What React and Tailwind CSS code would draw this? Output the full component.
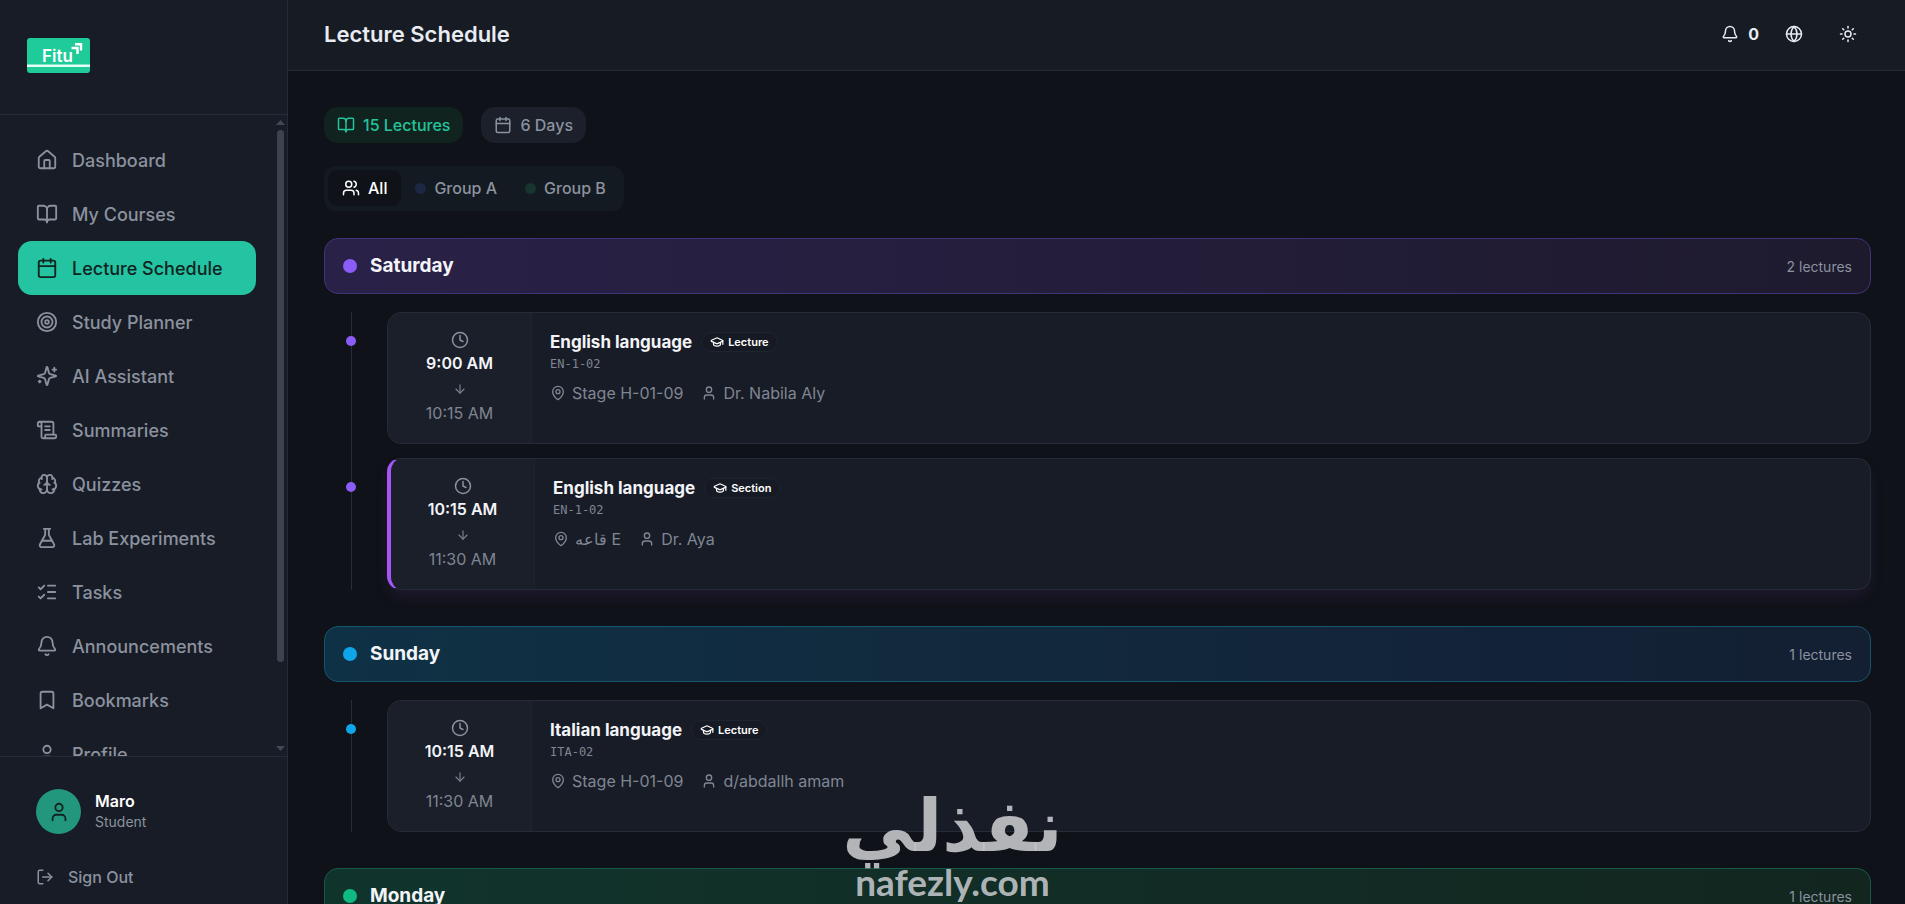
import {
  House, BookOpen, Calendar, Target, Sparkles, ScrollText, Brain, FlaskConical,
  ListChecks, Bell, Bookmark, User, LogOut, Globe, Sun, Users, Clock, ArrowDown,
  GraduationCap, MapPin,
} from "lucide-react";

const navItems = [
  { label: "Dashboard", icon: House },
  { label: "My Courses", icon: BookOpen },
  { label: "Lecture Schedule", icon: Calendar, active: true },
  { label: "Study Planner", icon: Target },
  { label: "AI Assistant", icon: SparklesDot },
  { label: "Summaries", icon: ScrollText },
  { label: "Quizzes", icon: Brain },
  { label: "Lab Experiments", icon: FlaskConical },
  { label: "Tasks", icon: ListChecks },
  { label: "Announcements", icon: Bell },
  { label: "Bookmarks", icon: Bookmark },
  { label: "Profile", icon: User },
];

const days = [
  {
    name: "Saturday",
    count: "2 lectures",
    header: "border-[#41337a] bg-linear-to-r from-[#2a2148] to-[#1e1a2e]",
    dot: "bg-[#8b5cf6]",
    lectures: [
      { title: "English language", type: "Lecture", code: "EN-1-02", start: "9:00 AM", end: "10:15 AM", room: "Stage H-01-09", teacher: "Dr. Nabila Aly" },
      { title: "English language", type: "Section", code: "EN-1-02", start: "10:15 AM", end: "11:30 AM", room: "قاعه E", teacher: "Dr. Aya", marked: true },
    ],
  },
  {
    name: "Sunday",
    count: "1 lectures",
    header: "border-[#15566f] bg-linear-to-r from-[#0f3145] to-[#131f33]",
    dot: "bg-[#0ea5e9]",
    lectures: [
      { title: "Italian language", type: "Lecture", code: "ITA-02", start: "10:15 AM", end: "11:30 AM", room: "Stage H-01-09", teacher: "d/abdallh amam" },
    ],
  },
  {
    name: "Monday",
    count: "1 lectures",
    header: "border-[#17584a] bg-linear-to-r from-[#10342c] to-[#12261f]",
    dot: "bg-[#10b981]",
    lectures: [],
  },
];

function SparklesDot(props) {
  return (
    <svg viewBox="0 0 24 24" fill="none" stroke="currentColor" strokeWidth="2" strokeLinecap="round" strokeLinejoin="round" {...props}>
      <path d="M9.937 15.5A2 2 0 0 0 8.5 14.063l-6.135-1.582a.5.5 0 0 1 0-.962L8.5 9.936A2 2 0 0 0 9.937 8.5l1.582-6.135a.5.5 0 0 1 .963 0L14.063 8.5A2 2 0 0 0 15.5 9.937l6.135 1.581a.5.5 0 0 1 0 .964L15.5 14.063a2 2 0 0 0-1.437 1.437l-1.582 6.135a.5.5 0 0 1-.963 0z" />
      <path d="M20 3v4M22 5h-4M4 17v2M5 18H3" />
    </svg>
  );
}

function Logo() {
  return (
    <svg className="h-[35px] w-[63px]" viewBox="0 0 63 35" role="img" aria-label="Fitu">
      <rect width="63" height="35" rx="3" fill="#1fcb98" />
      <text x="15" y="24" fontFamily="Inter, sans-serif" fontSize="17" fontWeight="600" fill="#fff">Fitu</text>
      <path d="M44.500 10H50.500V16M48 6.200H54V12.500" fill="none" stroke="#fff" strokeWidth="2.400" />
      <rect y="26.500" width="63" height="2.500" fill="#e4fff6" />
    </svg>
  );
}

function Sidebar() {
  return (
    <aside className="flex w-72 shrink-0 flex-col border-r border-[#262c37] bg-[#181c26]">
      <div className="flex h-[115px] shrink-0 items-center border-b border-[#262c37] px-[27px] pb-1">
        <Logo />
      </div>
      <div className="flex min-h-0 flex-1">
        <nav className="min-w-0 flex-1 overflow-hidden p-[18px] pr-0">
          {navItems.map(({ label, icon: Icon, active }) => (
            <a
              key={label}
              href="#"
              aria-current={active ? "page" : undefined}
              className={
                "flex h-[54px] items-center gap-[14px] rounded-[14px] px-[18px] text-[18px] font-medium " +
                (active ? "bg-[#24c3a2] text-[#10231f]" : "text-[#8b929f]")
              }
            >
              <Icon className="size-[22px] shrink-0" />
              <span className="whitespace-nowrap">{label}</span>
            </a>
          ))}
        </nav>
        <div className="ml-[18px] flex w-[13px] shrink-0 flex-col items-center py-[5px]" aria-hidden="true">
          <svg className="h-[5px] w-[9px]" viewBox="0 0 9 5"><path d="M0 5 4.500 0 9 5z" fill="#424854" /></svg>
          <div className="mt-[5px] flex w-[7px] flex-1 flex-col pb-1">
            <div className="h-[87%] rounded-full bg-[#3c424e]" />
          </div>
          <svg className="h-[5px] w-[9px]" viewBox="0 0 9 5"><path d="M0 0 4.500 5 9 0z" fill="#424854" /></svg>
        </div>
      </div>
      <div className="shrink-0 border-t border-[#262c37] px-9 pt-8 pb-[15px]">
        <div className="flex items-center gap-[14px]">
          <div className="flex size-[45px] items-center justify-center rounded-full bg-[#23977e] text-[#10231f]">
            <User className="size-[22px]" />
          </div>
          <div className="pb-[2px]">
            <div className="text-[16px] leading-[22px] font-semibold text-white">Maro</div>
            <div className="text-[14px] leading-[20px] text-[#8b929f]">Student</div>
          </div>
        </div>
        <button type="button" className="mt-[31px] flex items-center gap-[14px] text-[16px] leading-6 font-medium text-[#8b929f]">
          <LogOut className="size-[18px]" />
          Sign Out
        </button>
      </div>
    </aside>
  );
}

function Header() {
  return (
    <header className="flex h-[71px] shrink-0 items-center justify-between border-b border-[#232a34] bg-[#161b24] pr-12 pl-9 pb-[2px] text-[#e8ebf2]">
      <h1 className="text-[22px] font-semibold">Lecture Schedule</h1>
      <div className="flex items-center gap-[26px]">
        <button type="button" aria-label="Notifications" className="flex items-center gap-[9px] text-[16px] font-bold">
          <Bell className="size-[18px]" />0
        </button>
        <div className="flex gap-9">
          <button type="button" aria-label="Language"><Globe className="size-[18px]" /></button>
          <button type="button" aria-label="Theme"><Sun className="size-[18px]" /></button>
        </div>
      </div>
    </header>
  );
}

function LectureCard({ lecture, dot }) {
  return (
    <li className="flex items-start">
      <span className={"z-10 mt-6 -ml-[6px] size-[10px] shrink-0 rounded-full " + dot} />
      <article
        className={
          "ml-[31px] flex h-[132px] flex-1 overflow-hidden rounded-[14px] border border-[#262c37] bg-[#181c26] " +
          (lecture.marked ? "border-l-4 border-l-[#a855f7] shadow-[0_8px_18px_-4px_rgba(168,85,247,0.14)]" : "")
        }
      >
        <div className="flex w-36 shrink-0 flex-col items-center border-r border-[#1e232e] bg-[#1a1f29] pt-[18px] text-[16px] leading-6">
          <Clock className="size-[18px] text-[#8b929f]" />
          <span className="mt-[2px] font-semibold text-[#f3f4f8]">{lecture.start}</span>
          <ArrowDown className="mt-[7px] mb-[5px] size-[14px] text-[#7b828f]" />
          <span className="text-[#7f8693]">{lecture.end}</span>
        </div>
        <div className="px-[18px] pt-[18px]">
          <div className="flex h-[22px] items-center gap-[9px]">
            <h3 className="text-[17px] leading-[22px] font-bold text-[#f3f4f8]">{lecture.title}</h3>
            <span className="flex h-5 items-center gap-1 rounded-full border border-[#1f2530] bg-[#161a24] px-2 text-[11px] font-semibold text-white">
              <GraduationCap className="size-[14px]" />
              {lecture.type}
            </span>
          </div>
          <div className="mt-[2px] font-['DejaVu_Sans_Mono','Liberation_Mono',monospace] text-[12px] leading-[18px] text-[#7f8693]">{lecture.code}</div>
          <div className="mt-2 flex gap-[18px] text-[16px] leading-6 text-[#7f8693]">
            <span className="flex items-center gap-[6px]"><MapPin className="size-4" />{lecture.room}</span>
            <span className="flex items-center gap-[6px]"><User className="size-4" />{lecture.teacher}</span>
          </div>
        </div>
      </article>
    </li>
  );
}

function Day({ day }) {
  return (
    <section>
      <div className={"flex h-14 items-center rounded-[14px] border px-[18px] " + day.header}>
        <span className={"size-[14px] rounded-full " + day.dot} />
        <h2 className="ml-[13px] text-[19px] font-bold text-[#f3f4f8]">{day.name}</h2>
        <span className="ml-auto text-[14px] text-[#8b929f]">{day.count}</span>
      </div>
      {day.lectures.length > 0 && (
        <ul className="mt-[18px] ml-[27px] flex flex-col gap-[14px] border-l border-[#282d36]">
          {day.lectures.map((l) => <LectureCard key={l.start} lecture={l} dot={day.dot} />)}
        </ul>
      )}
    </section>
  );
}

export default function App() {
  return (
    <div className="flex h-screen overflow-hidden bg-[#0f1218] font-['Inter','Noto_Sans',sans-serif]">
      <Sidebar />
      <div className="flex min-w-0 flex-1 flex-col">
        <Header />
        <main className="min-h-0 flex-1 overflow-hidden pt-9 pr-[34px] pl-9">
          <div className="flex gap-[18px] text-[16px] leading-6 font-medium">
            <span className="flex h-9 items-center gap-2 rounded-[14px] bg-[#10231f] px-[13px] text-[#24c39a]">
              <BookOpen className="size-[18px]" />15 Lectures
            </span>
            <span className="flex h-9 items-center gap-2 rounded-[14px] bg-[#1b202a] px-[13px] text-[#8b929f]">
              <Calendar className="size-[18px]" />6 Days
            </span>
          </div>
          <div className="mt-[23px] flex h-[45px] w-fit items-start rounded-[12px] bg-[#141a21] p-1 text-[16px] font-medium text-[#8b929f]">
            <button type="button" className="flex h-9 items-center gap-2 rounded-[9px] bg-[#0f1218] px-[14px] text-white">
              <Users className="size-[18px]" />All
            </button>
            <button type="button" className="flex h-9 items-center gap-2 px-[14px]">
              <span className="size-[11px] rounded-full bg-[#1c2744]" />Group A
            </button>
            <button type="button" className="flex h-9 items-center gap-2 px-[14px]">
              <span className="size-[11px] rounded-full bg-[#16352f]" />Group B
            </button>
          </div>
          <div className="mt-[27px] flex flex-col gap-9">
            {days.map((d) => <Day key={d.name} day={d} />)}
          </div>
        </main>
      </div>
      <div className="pointer-events-none absolute inset-x-0 bottom-0 flex flex-col items-center pb-[2px] text-[#c4c6ca]/90">
        <div dir="rtl" className="font-['DejaVu_Sans',sans-serif] text-[72px] leading-[72px] font-bold">نفذلي</div>
        <div className="font-['Lato',sans-serif] text-[37px] leading-[40px] font-bold">nafezly.com</div>
      </div>
    </div>
  );
}
